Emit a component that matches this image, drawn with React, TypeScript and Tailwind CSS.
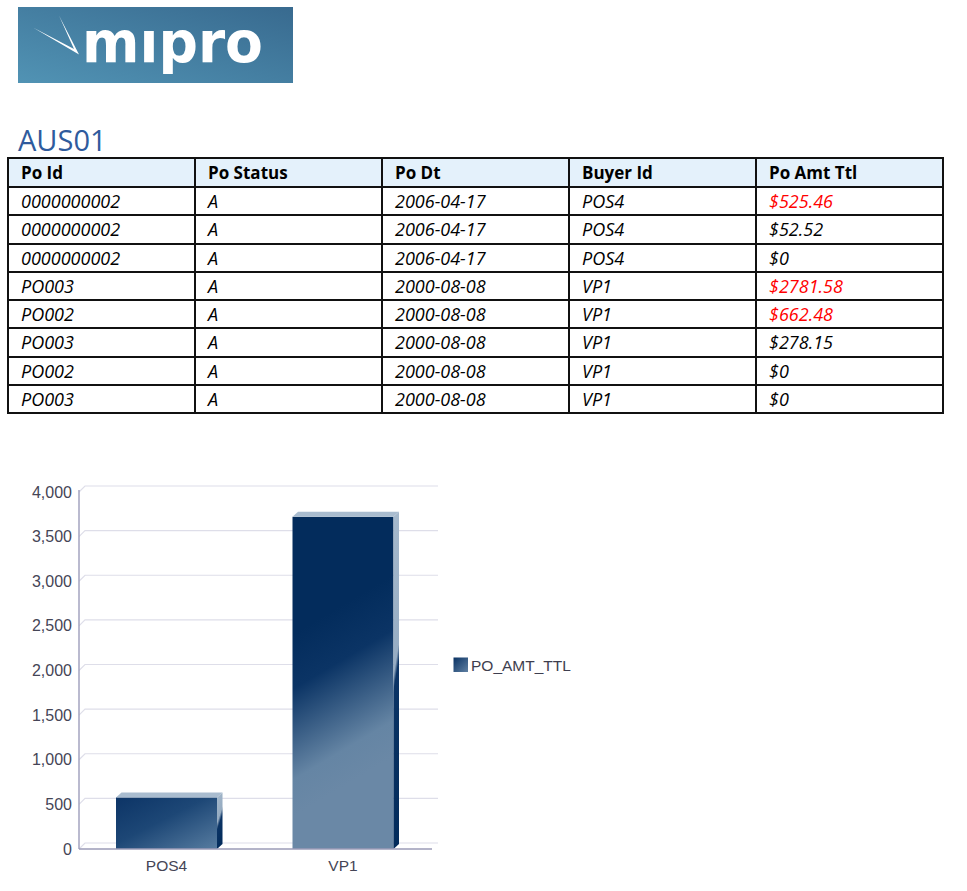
import React from 'react'

const rows = [
  { id: '0000000002', status: 'A', dt: '2006-04-17', buyer: 'POS4', amt: '$525.46', red: true },
  { id: '0000000002', status: 'A', dt: '2006-04-17', buyer: 'POS4', amt: '$52.52', red: false },
  { id: '0000000002', status: 'A', dt: '2006-04-17', buyer: 'POS4', amt: '$0', red: false },
  { id: 'PO003', status: 'A', dt: '2000-08-08', buyer: 'VP1', amt: '$2781.58', red: true },
  { id: 'PO002', status: 'A', dt: '2000-08-08', buyer: 'VP1', amt: '$662.48', red: true },
  { id: 'PO003', status: 'A', dt: '2000-08-08', buyer: 'VP1', amt: '$278.15', red: false },
  { id: 'PO002', status: 'A', dt: '2000-08-08', buyer: 'VP1', amt: '$0', red: false },
  { id: 'PO003', status: 'A', dt: '2000-08-08', buyer: 'VP1', amt: '$0', red: false },
]

const headers = ['Po Id', 'Po Status', 'Po Dt', 'Buyer Id', 'Po Amt Ttl']

function Logo() {
  return (
    <svg width="275" height="76" viewBox="18 7 275 76" className="block overflow-visible">
      <defs>
        <linearGradient id="logoBg" x1="0" y1="1" x2="1" y2="0">
          <stop offset="0" stopColor="#5193b4" />
          <stop offset="1" stopColor="#386a8f" />
        </linearGradient>
      </defs>
      <rect x="18" y="7" width="275" height="76" fill="url(#logoBg)" />
      <polygon points="33,27.5 74,49 59,15.5 79,54.5" fill="#ffffff" />
      <text
        x="82"
        y="62"
        textLength="181"
        lengthAdjust="spacingAndGlyphs"
        fill="#ffffff"
        fontSize="57"
        fontWeight="700"
        fontFamily="'DejaVu Sans', Verdana, sans-serif"
      >
        mıpro
      </text>
    </svg>
  )
}

// value -> pixel: 1000 units = 89.25px
const k = 0.08925
const base = 849

function Bar({ x, value, id, front }: { x: number; value: number; id: string; front: string }) {
  const w = 101
  const dx = 5.5
  const dy = 5
  const top = base - value * k
  return (
    <g>
      <rect x={x} y={top} width={w} height={base - top} fill={`url(#${front})`} />
      <polygon
        points={`${x + w},${top} ${x + w + dx},${top - dy} ${x + w + dx},${base - dy} ${x + w},${base}`}
        fill={`url(#side-${id})`}
      />
      <polygon
        points={`${x},${top} ${x + dx},${top - dy} ${x + w + dx},${top - dy} ${x + w},${top}`}
        fill="#a9bccf"
      />
    </g>
  )
}

const labelFont = "'Liberation Sans', Arial, sans-serif"

function Chart() {
  const ticks = [0, 500, 1000, 1500, 2000, 2500, 3000, 3500, 4000]
  return (
    <svg width="600" height="421" viewBox="0 470 600 421" className="block">
      <defs>
        <linearGradient id="frontPos" x1="0" y1="0" x2="1" y2="1">
          <stop offset="0" stopColor="#0c3466" />
          <stop offset="0.45" stopColor="#1d4776" />
          <stop offset="1" stopColor="#577ca0" />
        </linearGradient>
        <linearGradient id="frontVp" gradientUnits="userSpaceOnUse" x1="300" y1="630" x2="380" y2="765">
          <stop offset="0" stopColor="#032c5c" />
          <stop offset="0.3" stopColor="#0b3465" />
          <stop offset="0.8" stopColor="#6585a4" />
          <stop offset="1" stopColor="#6a88a6" />
        </linearGradient>
        <linearGradient id="side-pos" x1="0" y1="0" x2="0.3" y2="1">
          <stop offset="0" stopColor="#a7bacd" />
          <stop offset="0.5" stopColor="#95abc1" />
          <stop offset="0.62" stopColor="#0b3465" />
          <stop offset="1" stopColor="#032c5c" />
        </linearGradient>
        <linearGradient id="side-vp" x1="0" y1="0" x2="0.1" y2="1">
          <stop offset="0" stopColor="#a7bacd" />
          <stop offset="0.48" stopColor="#97adc3" />
          <stop offset="0.53" stopColor="#0b3465" />
          <stop offset="1" stopColor="#032c5c" />
        </linearGradient>
        <linearGradient id="legendSq" x1="0" y1="0" x2="1" y2="1">
          <stop offset="0" stopColor="#0a3263" />
          <stop offset="1" stopColor="#5f80a3" />
        </linearGradient>
      </defs>

      {ticks.map((t) => {
        const gy = 843 - t * k
        return (
          <g key={t}>
            <polyline points={`79,${gy + 6} 85,${gy} 438,${gy}`} fill="none" stroke="#dedee9" strokeWidth="1.2" />
            <text
              x="72"
              y={849 - t * k}
              textAnchor="end"
              dominantBaseline="central"
              fontSize="16"
              fill="#454556"
              fontFamily={labelFont}
            >
              {t.toLocaleString('en-US')}
            </text>
          </g>
        )
      })}

      <line x1="79" y1="490" x2="79" y2="849" stroke="#a3a3bf" strokeWidth="1.5" />

      <Bar x={116} value={577.98} id="pos" front="frontPos" />
      <Bar x={292.5} value={3722.21} id="vp" front="frontVp" />

      <line x1="79" y1="849" x2="432" y2="849" stroke="#9b9bb7" strokeWidth="1.5" />

      <text x="166.5" y="865" textAnchor="middle" dominantBaseline="central" fontSize="15.5" fill="#454556" fontFamily={labelFont}>
        POS4
      </text>
      <text x="343" y="865" textAnchor="middle" dominantBaseline="central" fontSize="15.5" fill="#454556" fontFamily={labelFont}>
        VP1
      </text>

      <rect x="453.5" y="657.5" width="14.5" height="14.5" fill="url(#legendSq)" />
      <text x="471" y="665" dominantBaseline="central" fontSize="15.5" fill="#3e3e4f" fontFamily={labelFont}>
        PO_AMT_TTL
      </text>
    </svg>
  )
}

export default function App() {
  return (
    <div className="min-h-screen bg-white pt-[7px] font-['Open_Sans',sans-serif] text-black">
      <div className="ml-[18px]">
        <Logo />
      </div>

      <h1 className="ml-[18px] mt-[38px] text-[29px] leading-[37px] text-[#2f5b9d]">AUS01</h1>

      <table className="ml-[7px] mt-[-1px] w-[935px] table-fixed border-collapse border-2 border-[#111]">
        <thead>
          <tr className="h-[29px] bg-[#e4f1fb]">
            {headers.map((h) => (
              <th key={h} className="w-[187px] border-2 border-[#111] px-[12px] py-0 text-left text-[17px] font-bold leading-none">
                {h}
              </th>
            ))}
          </tr>
        </thead>
        <tbody>
          {rows.map((r, i) => (
            <tr key={i} className="h-[28.25px] text-[18px] italic leading-none">
              <td className="border-2 border-[#111] px-[12px] py-0">{r.id}</td>
              <td className="border-2 border-[#111] px-[12px] py-0">{r.status}</td>
              <td className="border-2 border-[#111] px-[12px] py-0">{r.dt}</td>
              <td className="border-2 border-[#111] px-[12px] py-0">{r.buyer}</td>
              <td className={`border-2 border-[#111] px-[12px] py-0 ${r.red ? 'text-[#ff0000]' : ''}`}>{r.amt}</td>
            </tr>
          ))}
        </tbody>
      </table>

      <div className="mt-[56px]">
        <Chart />
      </div>
    </div>
  )
}
